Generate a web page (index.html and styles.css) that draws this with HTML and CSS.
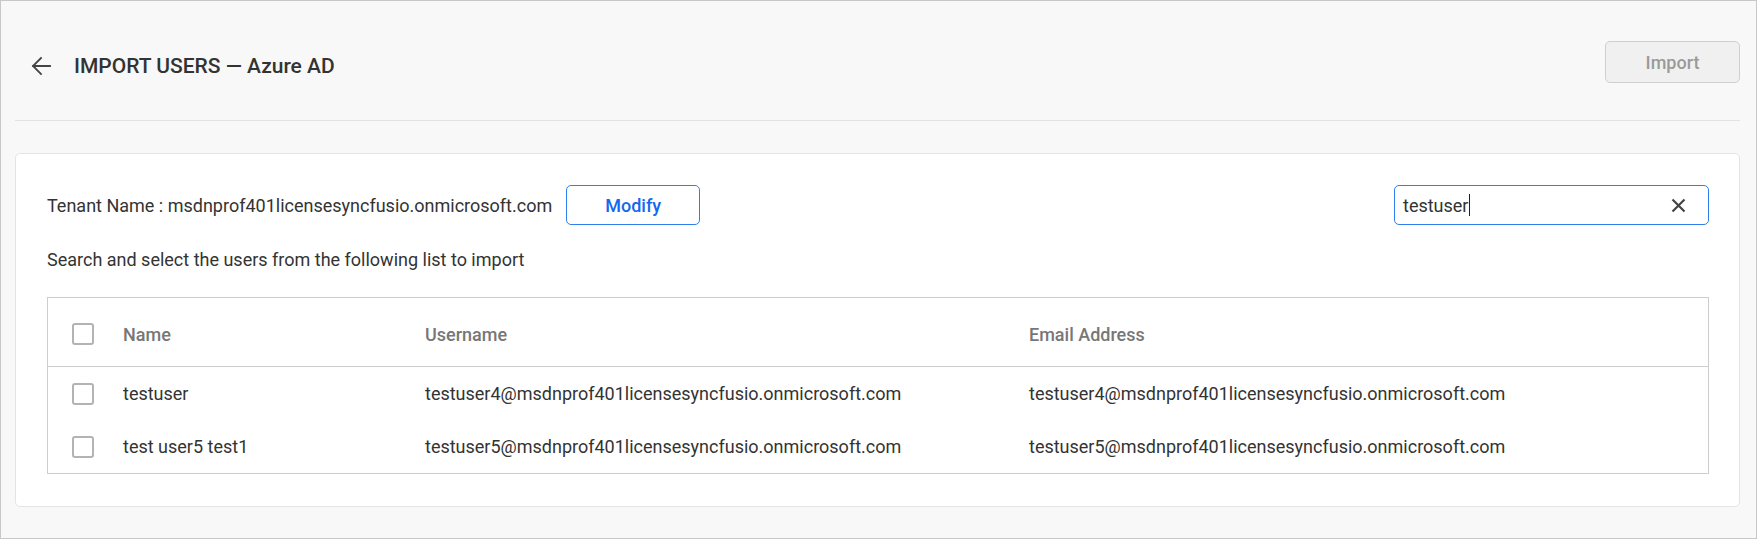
FILE: index.html
```html
<!DOCTYPE html>
<html>
<head>
<meta charset="utf-8">
<link rel="stylesheet" href="styles.css">
</head>
<body>
<div class="frame">
  <header class="page-header">
    <div class="title-group">
      <svg class="back-icon" width="20" height="20" viewBox="0 0 20 20">
        <path d="M19 10H2M10 2L2 10l8 8" fill="none" stroke="#444" stroke-width="1.8" stroke-linecap="square"/>
      </svg>
      <h1 class="title">IMPORT USERS — Azure AD</h1>
    </div>
    <button class="btn-import" disabled>Import</button>
  </header>

  <section class="card">
    <div class="tenant-row">
      <div class="tenant">
        <span class="tenant-text">Tenant Name : msdnprof401licensesyncfusio.onmicrosoft.com</span>
        <button class="btn-modify">Modify</button>
      </div>
      <div class="search-box">
        <span class="search-text">testuser</span><span class="caret"></span>
        <svg class="clear-icon" width="15" height="15" viewBox="0 0 15 15">
          <path d="M1.5 1.5L13.5 13.5M13.5 1.5L1.5 13.5" stroke="#444" stroke-width="2.2" fill="none"/>
        </svg>
      </div>
    </div>
    <p class="hint">Search and select the users from the following list to import</p>

    <div class="table">
      <div class="row head">
        <div class="cell check"><span class="checkbox"></span></div>
        <div class="cell name">Name</div>
        <div class="cell user">Username</div>
        <div class="cell email">Email Address</div>
      </div>
      <div class="row">
        <div class="cell check"><span class="checkbox"></span></div>
        <div class="cell name">testuser</div>
        <div class="cell user">testuser4@msdnprof401licensesyncfusio.onmicrosoft.com</div>
        <div class="cell email">testuser4@msdnprof401licensesyncfusio.onmicrosoft.com</div>
      </div>
      <div class="row">
        <div class="cell check"><span class="checkbox"></span></div>
        <div class="cell name">test user5 test1</div>
        <div class="cell user">testuser5@msdnprof401licensesyncfusio.onmicrosoft.com</div>
        <div class="cell email">testuser5@msdnprof401licensesyncfusio.onmicrosoft.com</div>
      </div>
    </div>
  </section>
</div>
</body>
</html>
```

FILE: styles.css
```css
* { box-sizing: border-box; }
html, body { margin: 0; padding: 0; background: #ffffff; }
body { font-family: Roboto, "Noto Sans", sans-serif; color: #333; font-size: 18px; }

.frame {
  width: 1757px;
  height: 539px;
  border: 1px solid #c8c8c8;
  background: #f8f8f8;
  padding: 0 16px 0 14px;
}

.page-header {
  display: flex;
  align-items: center;
  justify-content: space-between;
  padding: 40px 0 37px 0;
  border-bottom: 1px solid #e2e2e2;
}
.title-group {
  display: flex;
  align-items: center;
  padding-left: 16px;
  padding-top: 8px;
}
.back-icon { display: block; }
.title {
  margin: 0 0 0 23px;
  font-size: 21px;
  font-weight: 500;
  color: #333;
  line-height: 24px;
}
.btn-import {
  width: 135px;
  height: 42px;
  border: 1px solid #cfcfcf;
  border-radius: 5px;
  background: #f0f0f0;
  color: #9a9a9a;
  font-family: Roboto, sans-serif;
  font-size: 18px;
  font-weight: 500;
}

.card {
  margin-top: 32px;
  background: #fff;
  border: 1px solid #e4e4e4;
  border-radius: 5px;
  padding: 31px 30px 32px 31px;
}
.tenant-row {
  display: flex;
  align-items: center;
  justify-content: space-between;
  height: 40px;
}
.tenant { display: flex; align-items: center; }
.tenant-text { color: #333; }
.btn-modify {
  margin-left: 14px;
  width: 134px;
  height: 40px;
  border: 1px solid #2f7fec;
  border-radius: 5px;
  background: #fff;
  color: #1467f0;
  font-family: Roboto, sans-serif;
  font-size: 18px;
  font-weight: 500;
}
.search-box {
  width: 315px;
  height: 40px;
  border: 1px solid #2f7fec;
  border-radius: 5px;
  display: flex;
  align-items: center;
  padding-left: 8px;
  padding-right: 22px;
}
.search-text { color: #333; }
.caret { display: inline-block; width: 1px; height: 22px; background: #222; margin-left: 1px; }
.clear-icon { margin-left: auto; display: block; }

.hint {
  margin: 24px 0 0 0;
  line-height: 22px;
  color: #333;
}

.table {
  margin-top: 26px;
  border: 1px solid #cdcdcd;
}
.row {
  display: flex;
  align-items: center;
  height: 53px;
}
.row.head {
  height: 69px;
  padding-top: 4px;
  border-bottom: 1px solid #cdcdcd;
  color: #777;
  font-weight: 500;
}
.cell { white-space: nowrap; }
.check { width: 75px; padding-left: 24px; display: flex; align-items: center; }
.name { width: 302px; }
.user { width: 604px; }
.email { flex: 1; }
.checkbox {
  display: block;
  width: 22px;
  height: 22px;
  border: 2px solid #b3b3b3;
  border-radius: 3px;
  background: #fff;
}
```
